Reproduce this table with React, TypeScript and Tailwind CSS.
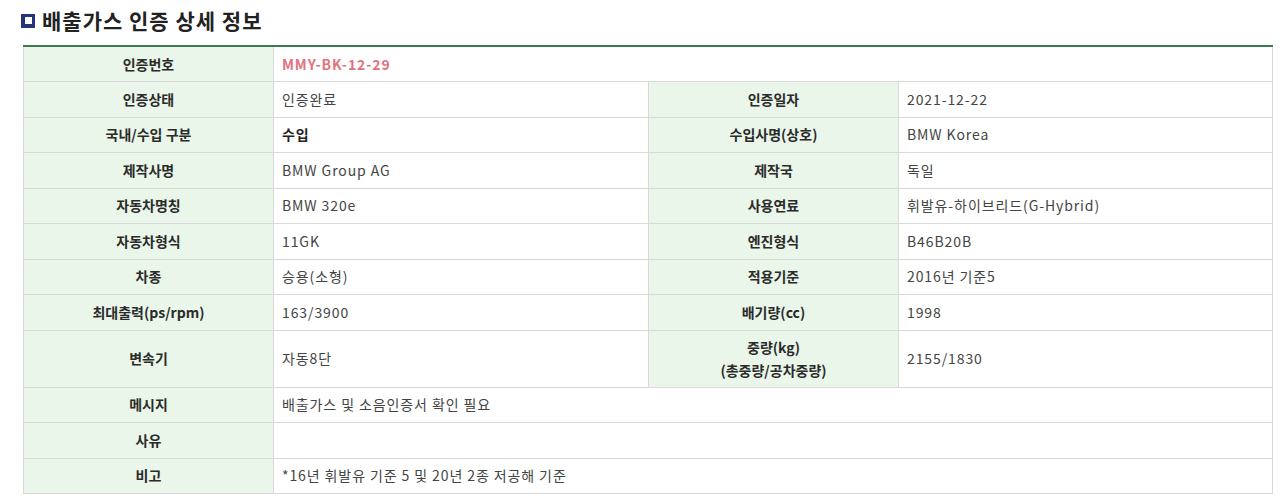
import React from 'react'

type Cell = { label: React.ReactNode; value: React.ReactNode }

const pairs: [Cell, Cell][] = [
  [
    { label: '인증상태', value: '인증완료' },
    { label: '인증일자', value: '2021-12-22' },
  ],
  [
    { label: '국내/수입 구분', value: <span className="font-bold text-[#222]">수입</span> },
    { label: '수입사명(상호)', value: 'BMW Korea' },
  ],
  [
    { label: '제작사명', value: 'BMW Group AG' },
    { label: '제작국', value: '독일' },
  ],
  [
    { label: '자동차명칭', value: 'BMW 320e' },
    { label: '사용연료', value: '휘발유-하이브리드(G-Hybrid)' },
  ],
  [
    { label: '자동차형식', value: '11GK' },
    { label: '엔진형식', value: 'B46B20B' },
  ],
  [
    { label: '차종', value: '승용(소형)' },
    { label: '적용기준', value: '2016년 기준5' },
  ],
  [
    { label: '최대출력(ps/rpm)', value: '163/3900' },
    { label: '배기량(cc)', value: '1998' },
  ],
]

const th = 'bg-[#e9f6e9] text-center font-bold text-[#2b2b2b] border border-[#d9d9d9] px-2'
const td = 'text-left text-[#444] tracking-[0.9px] border border-[#d9d9d9] px-[8px]'

export default function App() {
  return (
    <div className="w-[1280px] h-[501px] bg-white px-[23px] pt-[8px] font-['Noto_Sans_CJK_KR',sans-serif]">
      <h2 className="flex items-center gap-[7px] h-[25px] -ml-[2px] text-[21px] font-bold text-[#222] leading-none">
        <span className="flex items-center justify-center w-[14px] h-[14px] bg-[#25337c]">
          <span className="block w-[7px] h-[7px] bg-white" />
        </span>
        <span className="tracking-[1px]">배출가스 인증 상세 정보</span>
      </h2>

      <table className="mt-[12px] w-[1249px] table-fixed border-collapse border-t-2 border-t-[#3d7a50] text-[14px]">
        <colgroup>
          <col className="w-[250px]" />
          <col className="w-[375px]" />
          <col className="w-[250px]" />
          <col className="w-[374px]" />
        </colgroup>
        <tbody>
          <tr className="h-[35.5px]">
            <th className={th}>인증번호</th>
            <td className={td} colSpan={3}>
              <span className="font-bold text-[#e2727e]">MMY-BK-12-29</span>
            </td>
          </tr>
          {pairs.map(([a, b], i) => (
            <tr key={i} className="h-[35.5px]">
              <th className={th}>{a.label}</th>
              <td className={td}>{a.value}</td>
              <th className={th}>{b.label}</th>
              <td className={td}>{b.value}</td>
            </tr>
          ))}
          <tr className="h-[57px]">
            <th className={th}>변속기</th>
            <td className={td}>자동8단</td>
            <th className={`${th} leading-[23px]`}>
              중량(kg)
              <br />
              (총중량/공차중량)
            </th>
            <td className={td}>2155/1830</td>
          </tr>
          <tr className="h-[35.5px]">
            <th className={th}>메시지</th>
            <td className={td} colSpan={3}>배출가스 및 소음인증서 확인 필요</td>
          </tr>
          <tr className="h-[35.5px]">
            <th className={th}>사유</th>
            <td className={td} colSpan={3}></td>
          </tr>
          <tr className="h-[35.5px]">
            <th className={th}>비고</th>
            <td className={td} colSpan={3}>*16년 휘발유 기준 5 및 20년 2종 저공해 기준</td>
          </tr>
        </tbody>
      </table>
    </div>
  )
}
